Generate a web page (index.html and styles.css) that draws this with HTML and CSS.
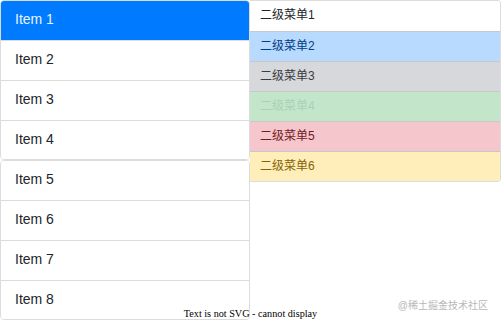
FILE: index.html
```html
<!DOCTYPE html>
<html lang="en">
<head>
  <meta charset="UTF-8" />
  <title>Menu</title>
  <link rel="stylesheet" href="styles.css">
</head>
<body>
  <div class="menu">
    <div class="main-col">
      <ul class="list-group">
        <li class="list-item active">Item 1</li>
        <li class="list-item">Item 2</li>
        <li class="list-item">Item 3</li>
        <li class="list-item">Item 4</li>
      </ul>
      <ul class="list-group">
        <li class="list-item">Item 5</li>
        <li class="list-item">Item 6</li>
        <li class="list-item">Item 7</li>
        <li class="list-item">Item 8</li>
      </ul>
    </div>
    <ul class="sub-menu">
      <li class="sub-item">二级菜单1</li>
      <li class="sub-item primary">二级菜单2</li>
      <li class="sub-item secondary">二级菜单3</li>
      <li class="sub-item success">二级菜单4</li>
      <li class="sub-item danger">二级菜单5</li>
      <li class="sub-item warning">二级菜单6</li>
    </ul>
  </div>
  <div class="fallback">Text is not SVG - cannot display</div>
  <div class="watermark">@稀土掘金技术社区</div>
</body>
</html>
```

FILE: styles.css
```css
* {
  box-sizing: border-box;
}

body {
  margin: 0;
  background: #fff;
  font-family: "Liberation Sans", Arial, "Noto Sans CJK SC", sans-serif;
  color: #212529;
  width: 501px;
  height: 321px;
  position: relative;
  overflow: hidden;
}

ul {
  margin: 0;
  padding: 0;
  list-style: none;
}

.menu {
  display: flex;
  align-items: flex-start;
}

.main-col {
  width: 250px;
  display: flex;
  flex-direction: column;
}

.list-group {
  border: 1px solid #dcdcdc;
  border-radius: 4px;
  overflow: hidden;
}

.list-item {
  height: 40px;
  line-height: 36px;
  padding-left: 14px;
  font-size: 14px;
  border-top: 1px solid #dcdcdc;
  background: #fff;
}

.list-item:first-child {
  border-top: none;
  height: 39px;
  line-height: 37px;
}

.list-item:last-child {
  height: 39px;
}

.list-item.active {
  background: #007bff;
  color: #eaf4ff;
}

.sub-menu {
  width: 251px;
  border: 1px solid #dcdcdc;
  border-left: none;
  border-radius: 0 4px 4px 0;
  overflow: hidden;
}

.sub-item {
  height: 30px;
  line-height: 29px;
  padding-left: 10px;
  font-size: 12px;
  border-top: 1px solid #c8c8c8;
  color: #212529;
  background: #fff;
}

.sub-item:first-child {
  border-top: none;
}

.primary {
  background: #b8daff;
  color: #004085;
}

.secondary {
  background: #d6d8db;
  color: #383d41;
}

.success {
  background: #c3e6cb;
  color: #a9d1b3;
}

.danger {
  background: #f5c6cb;
  color: #721c24;
}

.warning {
  background: #ffeeba;
  color: #856404;
}

.fallback {
  position: absolute;
  left: 0;
  right: 0;
  bottom: 2px;
  text-align: center;
  font-family: "Liberation Serif", "Times New Roman", serif;
  font-size: 10.2px;
  color: #000;
}

.watermark {
  position: absolute;
  right: 13px;
  bottom: 9px;
  font-size: 10px;
  color: #b8b8b8;
}
```
